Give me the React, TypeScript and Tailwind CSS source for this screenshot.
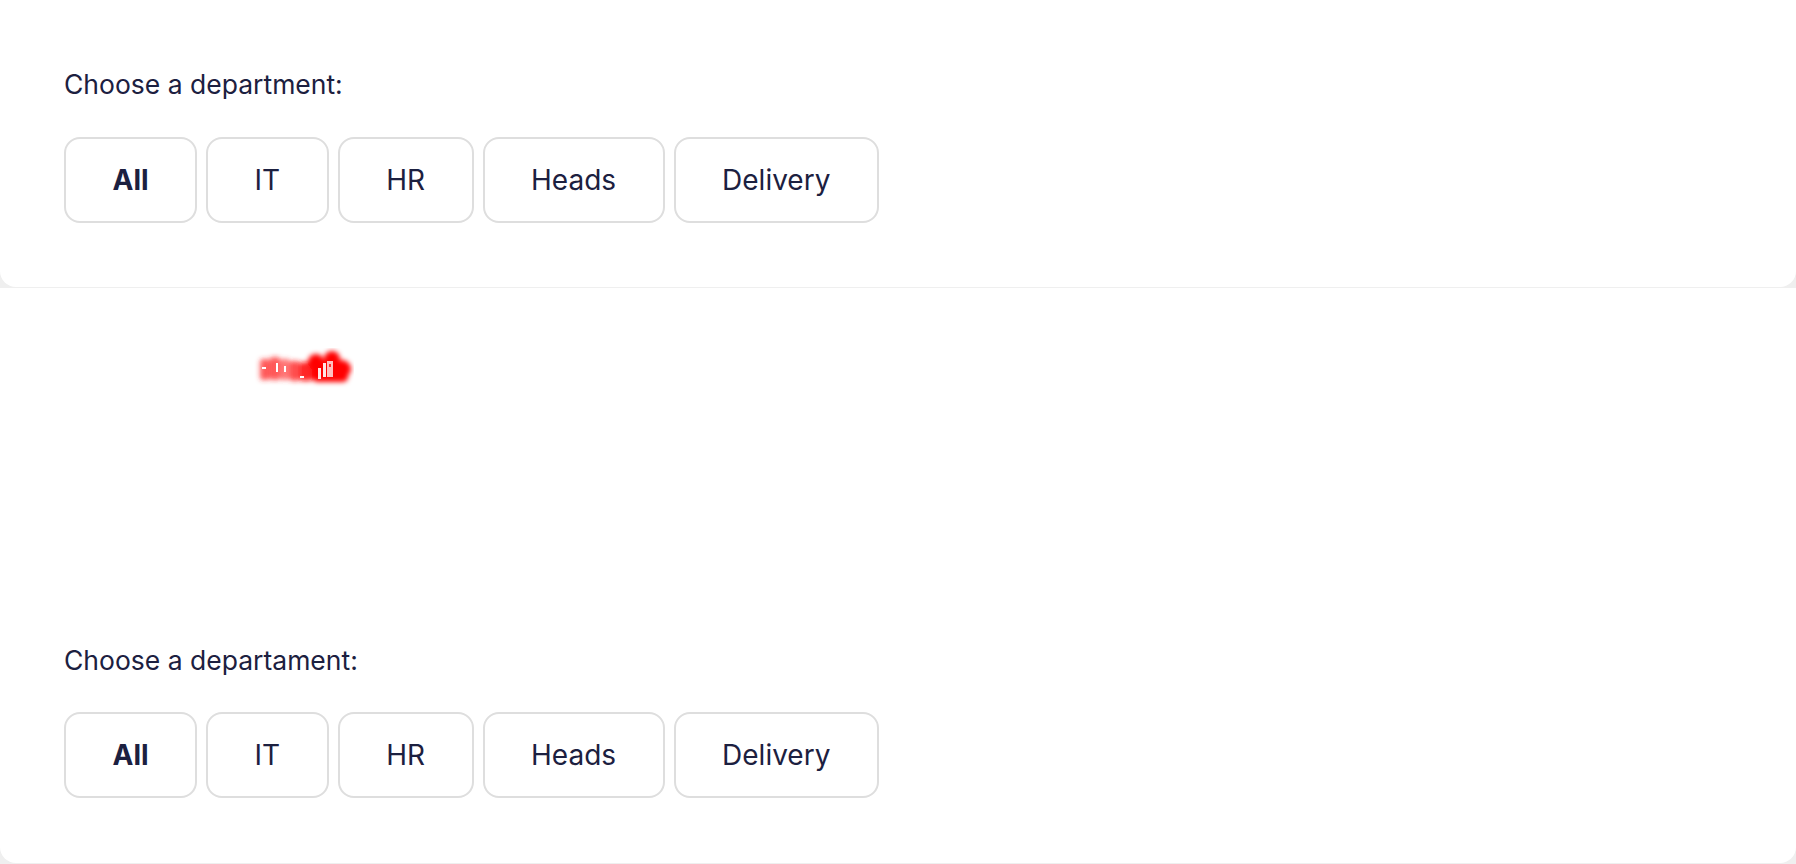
import React from "react";

const depts = ["All", "IT", "HR", "Heads", "Delivery"];

function Buttons() {
  return (
    <div className="flex gap-[9px]">
      {depts.map((d, i) => (
        <button
          key={d}
          className={`h-[86px] px-[46.5px] rounded-[16px] border-2 border-[#dedede] bg-white text-[28px] text-[#1c2040] ${
            i === 0 ? "font-bold" : "font-normal"
          }`}
        >
          {d}
        </button>
      ))}
    </div>
  );
}

function Blob() {
  return (
    <svg width="100" height="40" viewBox="0 0 100 40" className="ml-[190px]">
      <defs>
        <filter id="bl" x="-20%" y="-40%" width="140%" height="180%">
          <feGaussianBlur stdDeviation="2.6" />
        </filter>
      </defs>
      <g filter="url(#bl)">
        <rect x="6" y="11" width="10" height="21" rx="3" fill="#ff3030" opacity="0.8" />
        <rect x="16" y="9" width="10" height="23" rx="3" fill="#ff2020" opacity="0.75" />
        <rect x="26" y="11" width="10" height="21" rx="3" fill="#ff3a3a" opacity="0.7" />
        <rect x="36" y="13" width="10" height="20" rx="3" fill="#ff2020" opacity="0.8" />
        <rect x="46" y="14" width="12" height="19" rx="3" fill="#ff1010" opacity="0.9" />
        <circle cx="62" cy="14" r="8" fill="#ff0000" />
        <circle cx="70" cy="24" r="10" fill="#ff0000" />
        <circle cx="78" cy="11" r="8" fill="#ff0000" />
        <circle cx="88" cy="21" r="9" fill="#ff0000" />
        <rect x="58" y="14" width="36" height="20" rx="5" fill="#ff0000" />
      </g>
      <rect x="8" y="19" width="4" height="2" fill="#ffffff" />
      <rect x="22" y="15" width="2" height="9" fill="#ffffff" />
      <rect x="30" y="18" width="2" height="6" fill="#ffffff" />
      <rect x="46" y="28" width="4" height="2" fill="#ffffff" />
      <rect x="64" y="20" width="3" height="11" fill="#ffffff" opacity="0.9" />
      <rect x="69" y="15" width="3" height="14" fill="#ffffff" opacity="0.9" />
      <rect x="73" y="13" width="6" height="16" fill="#ffe0e0" opacity="0.85" />
      <rect x="75" y="16" width="2" height="3" fill="#ff3030" />
    </svg>
  );
}

export default function App() {
  return (
    <div
      className="min-h-[864px] w-full bg-[#efefef] flex flex-col"
      style={{ fontFamily: "Inter, 'Noto Sans', sans-serif" }}
    >
      <div className="bg-white rounded-b-[16px] pt-[67px] pb-[64px] px-[64px] flex flex-col">
        <div className="text-[26.5px] leading-[34px] text-[#1c2040]">Choose a department:</div>
        <div className="mt-[36px]">
          <Buttons />
        </div>
      </div>
      <div className="bg-white rounded-b-[16px] mt-px pt-[60px] pb-[65px] px-[64px] flex flex-col">
        <Blob />
        <div className="mt-[255px] text-[26.5px] leading-[34px] text-[#1c2040]">
          Choose a departament:
        </div>
        <div className="mt-[35px]">
          <Buttons />
        </div>
      </div>
    </div>
  );
}
